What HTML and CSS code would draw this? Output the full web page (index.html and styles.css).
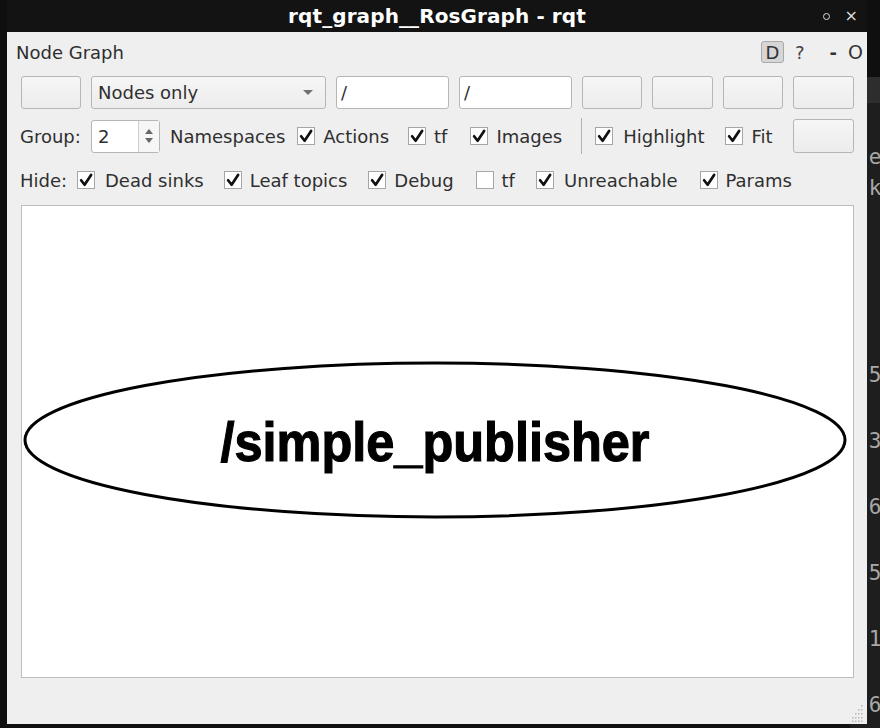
FILE: index.html
```html
<!DOCTYPE html>
<html>
<head>
<meta charset="utf-8">
<title>rqt_graph__RosGraph - rqt</title>
<link rel="stylesheet" href="styles.css">
</head>
<body>
<div class="desktop">
  <div class="term">
    <div class="term-head"></div>
    <div class="term-body">
      <div class="tl tl-a">.e</div>
      <div class="tl tl-b">:k</div>
      <div class="tl tl-c">'5</div>
      <div class="tl tl-d">:3</div>
      <div class="tl tl-d">.6</div>
      <div class="tl tl-d">)5</div>
      <div class="tl tl-d">:1</div>
      <div class="tl tl-d">:6</div>
    </div>
  </div>

  <div class="win">
    <div class="titlebar">
      <span></span>
      <span class="title">rqt_graph__RosGraph - rqt</span>
      <span class="tb-btns"><span class="tb-o"></span><span class="tb-x">×</span></span>
    </div>

    <div class="content">
      <div class="plugin-head">
        <span class="plugin-name">Node Graph</span>
        <span class="ph-tools">
          <span class="dbtn">D</span>
          <span class="q">?</span>
          <span class="dash">-</span>
          <span class="oo">O</span>
        </span>
      </div>

      <div class="row row1">
        <span class="btn w60"></span>
        <span class="combo">Nodes only<span class="combo-arrow"></span></span>
        <span class="input">/</span>
        <span class="input">/</span>
        <span class="btn w60"></span>
        <span class="btn w61"></span>
        <span class="btn w60"></span>
        <span class="btn w61"></span>
      </div>

      <div class="row row2">
        <span class="lbl group-lbl">Group:</span>
        <span class="spin"><span class="spin-val">2</span><span class="spin-arrows"><span class="up"></span><span class="down"></span></span></span>
        <span class="lbl ns">Namespaces</span>
        <span class="chk c-actions"><span class="cb"><svg viewBox="0 0 16 16"><path d="M3.1 8.2 6.6 12.8 13.1 3"/></svg></span>Actions</span>
        <span class="chk c-tf"><span class="cb"><svg viewBox="0 0 16 16"><path d="M3.1 8.2 6.6 12.8 13.1 3"/></svg></span>tf</span>
        <span class="chk c-images"><span class="cb"><svg viewBox="0 0 16 16"><path d="M3.1 8.2 6.6 12.8 13.1 3"/></svg></span>Images</span>
        <span class="vsep"></span>
        <span class="chk c-highlight"><span class="cb"><svg viewBox="0 0 16 16"><path d="M3.1 8.2 6.6 12.8 13.1 3"/></svg></span>Highlight</span>
        <span class="chk c-fit"><span class="cb"><svg viewBox="0 0 16 16"><path d="M3.1 8.2 6.6 12.8 13.1 3"/></svg></span>Fit</span>
        <span class="btn w61 fitbtn"></span>
      </div>

      <div class="row row3">
        <span class="lbl hide-lbl">Hide:</span>
        <span class="chk c-dead"><span class="cb"><svg viewBox="0 0 16 16"><path d="M3.1 8.2 6.6 12.8 13.1 3"/></svg></span>Dead sinks</span>
        <span class="chk c-leaf"><span class="cb"><svg viewBox="0 0 16 16"><path d="M3.1 8.2 6.6 12.8 13.1 3"/></svg></span>Leaf topics</span>
        <span class="chk c-debug"><span class="cb"><svg viewBox="0 0 16 16"><path d="M3.1 8.2 6.6 12.8 13.1 3"/></svg></span>Debug</span>
        <span class="chk c-tf2"><span class="cb"></span>tf</span>
        <span class="chk c-unreach"><span class="cb"><svg viewBox="0 0 16 16"><path d="M3.1 8.2 6.6 12.8 13.1 3"/></svg></span>Unreachable</span>
        <span class="chk c-params"><span class="cb"><svg viewBox="0 0 16 16"><path d="M3.1 8.2 6.6 12.8 13.1 3"/></svg></span>Params</span>
      </div>

      <div class="canvas">
        <svg class="graph" viewBox="0 0 831 471" width="831" height="471">
          <ellipse cx="413" cy="234" rx="410" ry="77" fill="none" stroke="#000" stroke-width="3"/>
          <text x="413" y="255" text-anchor="middle" textLength="429" lengthAdjust="spacingAndGlyphs" class="node-label">/simple_publisher</text>
        </svg>
      </div>
    </div>

    <svg class="grip" viewBox="0 0 12 18" width="12" height="18">
      <g fill="#b8b8b8">
        <rect x="9" y="1" width="1.5" height="1.5"/>
        <rect x="9" y="5" width="1.5" height="1.5"/>
        <rect x="6" y="5" width="1.5" height="1.5"/>
        <rect x="9" y="9" width="1.5" height="1.5"/>
        <rect x="6" y="9" width="1.5" height="1.5"/>
        <rect x="3" y="9" width="1.5" height="1.5"/>
        <rect x="9" y="13" width="1.5" height="1.5"/>
        <rect x="6" y="13" width="1.5" height="1.5"/>
        <rect x="3" y="13" width="1.5" height="1.5"/>
        <rect x="0" y="13" width="1.5" height="1.5"/>
        <rect x="9" y="16.5" width="1.5" height="1.5"/>
        <rect x="6" y="16.5" width="1.5" height="1.5"/>
        <rect x="3" y="16.5" width="1.5" height="1.5"/>
        <rect x="0" y="16.5" width="1.5" height="1.5"/>
      </g>
    </svg>
  </div>
</div>
</body>
</html>
```

FILE: styles.css
```css
* { box-sizing: border-box; margin: 0; padding: 0; }
html, body { width: 880px; height: 728px; overflow: hidden; }
body {
  background: #0f0f0f;
  font-family: "DejaVu Sans", "Noto Sans", sans-serif;
  font-size: 18px;
  color: #2f2f2f;
}
.desktop { position: relative; width: 880px; height: 728px; }

/* background terminal window */
.term {
  position: absolute;
  left: 850px; top: 77px; right: 0; bottom: 0;
  background: #1e1e1e;
  overflow: hidden;
}
.term-head { height: 26px; background: #2d2d2d; }
.term-body {
  font-family: "DejaVu Sans Mono", "Liberation Mono", monospace;
  font-size: 21px;
  color: #a8a8a8;
  padding-left: 6px;
}
.tl { height: 24px; line-height: 24px; white-space: pre; }
.tl-a { margin-top: 42px; }
.tl-b { margin-top: 7px; }
.tl-c { margin-top: 163px; }
.tl-d { margin-top: 42px; }

/* main window */
.win {
  position: absolute;
  left: 7px; top: 0;
  width: 860px; height: 724px;
  background: #efefef;
  display: flex;
  flex-direction: column;
}
.titlebar {
  height: 32px;
  background: #131313;
  color: #fff;
  display: grid;
  grid-template-columns: 1fr auto 1fr;
  align-items: center;
}
.title { font-weight: bold; font-size: 20px; letter-spacing: 0.1px; }
.tb-btns {
  justify-self: end;
  display: flex;
  align-items: center;
  gap: 15px;
  padding-right: 9px;
  color: #ddd;
}
.tb-o {
  width: 7px; height: 7px;
  border: 1.5px solid #ddd;
  border-radius: 50%;
}
.tb-x { font-size: 16px; line-height: 16px; }

.content {
  padding: 0 13px 0 14px;
  display: flex;
  flex-direction: column;
}
.plugin-head {
  height: 40px;
  display: flex;
  align-items: center;
  justify-content: space-between;
  margin-left: -5px;
}
.plugin-name { font-size: 18px; color: #2e2e2e; }
.ph-tools { display: flex; align-items: center; margin-right: -9px; }
.dbtn {
  width: 23px; height: 22px;
  background: #d6d6d6;
  border: 1px solid #a9a9a9;
  border-radius: 3px;
  display: flex; align-items: center; justify-content: center;
  font-size: 18px; color: #333;
}
.q { margin-left: 11px; font-size: 18px; color: #444; }
.dash { margin-left: 25px; font-size: 18px; font-weight: bold; color: #333; }
.oo { margin-left: 11px; font-size: 19px; color: #333; }

.row { display: flex; align-items: center; }
.row1 { margin-top: 4px; height: 33px; gap: 10px; }
.btn {
  height: 33px;
  border: 1px solid #b6b6b6;
  border-radius: 3px;
  background: linear-gradient(#f6f6f6, #ececec);
}
.w60 { width: 60px; }
.w61 { width: 61px; }
.combo {
  width: 235px; height: 33px;
  border: 1px solid #b6b6b6;
  border-radius: 3px;
  background: linear-gradient(#f6f6f6, #ececec);
  display: flex; align-items: center;
  padding-left: 6px;
  font-size: 18px;
}
.combo-arrow {
  margin-left: auto;
  margin-right: 12px;
  width: 0; height: 0;
  border-left: 5px solid transparent;
  border-right: 5px solid transparent;
  border-top: 5px solid #707070;
}
.input {
  width: 113px; height: 33px;
  background: #fff;
  border: 1px solid #b6b6b6;
  border-radius: 3px;
  display: flex; align-items: center;
  padding-left: 4px;
  font-size: 18px;
}

.row2 { margin-top: 10px; height: 34px; margin-left: -1px; }
.lbl { font-size: 18px; }
.group-lbl { width: 71px; }
.spin {
  width: 69px; height: 33px;
  background: #fff;
  border: 1px solid #b6b6b6;
  border-radius: 3px;
  display: flex;
  font-size: 18px;
}
.spin-val { flex: 1; display: flex; align-items: center; padding-left: 6px; }
.spin-arrows {
  width: 21px;
  border-left: 1px solid #cfcfcf;
  background: #f6f6f6;
  display: flex; flex-direction: column; align-items: center; justify-content: center;
  gap: 4px;
}
.up, .down { width: 0; height: 0; border-left: 4px solid transparent; border-right: 4px solid transparent; }
.up { border-bottom: 5px solid #666; }
.down { border-top: 5px solid #666; }
.ns { margin-left: 10px; }

.chk { display: flex; align-items: center; font-size: 18px; white-space: nowrap; }
.cb {
  width: 18px; height: 18px;
  border: 1px solid #a6a6a6;
  background: #fff;
  margin-right: 8px;
  display: flex; align-items: center; justify-content: center;
}
.cb svg { width: 16px; height: 16px; }
.cb path { fill: none; stroke: #111; stroke-width: 2.7; stroke-linecap: round; stroke-linejoin: round; }

.c-actions { margin-left: 12px; }
.c-tf { margin-left: 19px; }
.c-images { margin-left: 23px; }
.vsep { width: 1px; height: 36px; background: #b3b3b3; margin-left: 19px; }
.c-highlight { margin-left: 13px; }
.c-highlight .cb { margin-right: 10px; }
.c-fit { margin-left: 20px; }
.c-fit .cb { margin-right: 9px; }
.fitbtn { margin-left: auto; height: 34px; }

.row3 { margin-top: 10px; height: 34px; margin-left: -1px; }
.hide-lbl { width: 57px; }
.c-dead .cb { margin-right: 10px; }
.c-leaf { margin-left: 20px; }
.c-debug { margin-left: 21px; }
.c-tf2 { margin-left: 22px; }
.c-unreach { margin-left: 21px; }
.c-unreach .cb { margin-right: 10px; }
.c-params { margin-left: 22px; }

.canvas {
  margin-top: 8px;
  height: 473px;
  background: #fff;
  border: 1px solid #bdbdbd;
  overflow: hidden;
}
.graph { display: block; }
.node-label {
  font-family: "Liberation Sans", Arial, sans-serif;
  font-weight: bold;
  font-size: 56px;
  fill: #000;
  stroke: #000;
  stroke-width: 1.2px;
}

.grip { position: absolute; right: 3px; bottom: 2px; }
```
